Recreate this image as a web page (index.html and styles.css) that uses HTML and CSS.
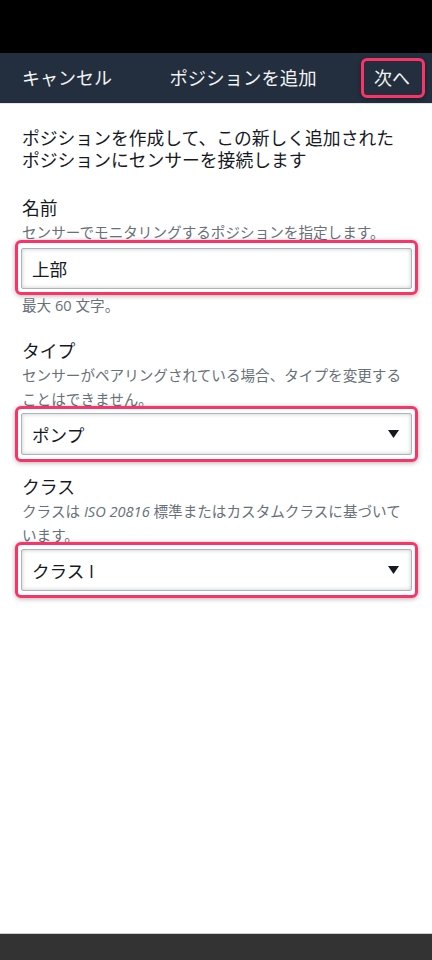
FILE: index.html
```html
<!DOCTYPE html>
<html lang="ja">
<head>
<meta charset="utf-8">
<title>ポジションを追加</title>
<link rel="stylesheet" href="styles.css">
</head>
<body>
<div class="screen">
  <div class="statusbar"></div>
  <header class="topbar">
    <span class="topbar-btn">キャンセル</span>
    <span class="topbar-title">ポジションを追加</span>
    <span class="topbar-next">次へ</span>
  </header>
  <main class="content">
    <p class="intro">ポジションを作成して、この新しく追加された<br>ポジションにセンサーを接続します</p>

    <section class="field field-first">
      <div class="label">名前</div>
      <div class="hint">センサーでモニタリングするポジションを指定します。</div>
      <div class="frame frame-input">
        <div class="input">上部</div>
      </div>
      <div class="count">最大 60 文字。</div>
    </section>

    <section class="field field-second">
      <div class="label">タイプ</div>
      <div class="hint">センサーがペアリングされている場合、タイプを変更することはできません。</div>
      <div class="frame">
        <div class="select">
          <span>ポンプ</span>
          <svg class="caret" width="11" height="8" viewBox="0 0 11 8"><polygon points="0,0 11,0 5.5,8" fill="#16191f"/></svg>
        </div>
      </div>
    </section>

    <section class="field field-third">
      <div class="label">クラス</div>
      <div class="hint"><span>クラスは </span><span class="std">ISO 20816</span><span> 標準またはカスタムクラスに基づいて</span><br><span>います。</span></div>
      <div class="frame">
        <div class="select">
          <span>クラス I</span>
          <svg class="caret" width="11" height="8" viewBox="0 0 11 8"><polygon points="0,0 11,0 5.5,8" fill="#16191f"/></svg>
        </div>
      </div>
    </section>
  </main>
  <div class="navbar"></div>
</div>
</body>
</html>
```
FILE: styles.css
```css
* { box-sizing: border-box; }
html, body {
  margin: 0;
  padding: 0;
  background: #ffffff;
}
body {
  font-family: "Open Sans", "Noto Sans CJK JP", sans-serif;
  color: #16191f;
}
.screen {
  width: 432px;
  height: 960px;
  display: flex;
  flex-direction: column;
  overflow: hidden;
}
.statusbar {
  height: 53px;
  background: #000000;
  flex: none;
}
.topbar {
  height: 51px;
  flex: none;
  background: #232f3e;
  border-bottom: 1px solid #e3e5e8;
  display: flex;
  align-items: center;
  justify-content: space-between;
  padding: 0 22px 0 22px;
  color: #f2f3f3;
  font-size: 18px;
}
.topbar-btn, .topbar-title {
  line-height: 26px;
}
.topbar-title {
  font-size: 18.4px;
}
.topbar-next {
  line-height: 34px;
  padding: 0 12px 0 10px;
  margin: 0 -15px 0 -13px;
  border: 3px solid #fb3468;
  border-radius: 6px;
  box-shadow: 0 1px 4px rgba(0, 0, 0, 0.35);
}
.content {
  flex: 1;
  padding: 0 22px;
}
.intro {
  margin: 23px 0 0 0;
  font-size: 17.8px;
  line-height: 22px;
}
.field { display: flex; flex-direction: column; }
.field-first { margin-top: 25px; }
.field-second { margin-top: 24px; }
.field-third { margin-top: 13px; }
.label {
  font-size: 17.8px;
  line-height: 24px;
}
.hint {
  font-size: 14.6px;
  line-height: 24px;
  color: #687078;
}
.std {
  font-style: italic;
}
.frame {
  margin: -5px -8px 0 -7px;
  border: 3px solid #fb3468;
  border-radius: 6px;
  padding: 4px 3px;
  box-shadow: 0 1px 5px rgba(0, 0, 0, 0.3);
  background: #ffffff;
}
.frame-input {
  margin-top: -4px;
  padding: 5px 3px 3px 3px;
}
.input, .select {
  height: 41px;
  border: 1px solid #aab7b8;
  border-radius: 2px;
  box-shadow: inset 0 0 4px rgba(0, 0, 0, 0.22);
  display: flex;
  align-items: center;
  padding: 0 12px 0 10px;
  font-size: 17.6px;
  color: #16191f;
}
.select {
  height: 42px;
  justify-content: space-between;
}
.caret { display: block; }
.count {
  font-size: 14.6px;
  line-height: 20px;
  color: #687078;
}
.navbar {
  height: 27px;
  flex: none;
  background: #333333;
  border-top: 1px solid #cfcfcf;
}
```
